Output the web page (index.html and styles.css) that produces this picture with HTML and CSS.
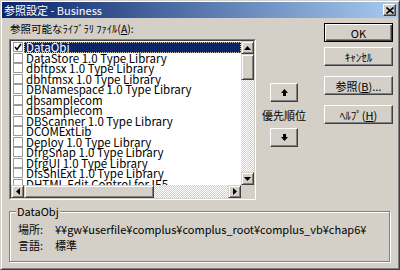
FILE: index.html
```html
<!DOCTYPE html>
<html lang="ja">
<head>
    <meta charset="UTF-8">
    <title>参照設定 - Business</title>
    <link rel="stylesheet" href="styles.css">
</head>
<body>
<div class="window">
    <div class="titlebar">
        <span class="title">参照設定 - Business</span>
        <div class="close-btn">
            <svg viewBox="0 0 8 7" width="8" height="7">
                <path d="M0.5 0.5 L7.5 6.5 M7.5 0.5 L0.5 6.5" stroke="#000" stroke-width="1.6" fill="none"/>
            </svg>
        </div>
    </div>

    <div class="main">
        <div class="top">
            <!-- Library list -->
            <div class="left">
                <div class="label">参照可能なﾗｲﾌﾞﾗﾘ ﾌｧｲﾙ(<u>A</u>):</div>
                <div class="listbox">
                    <div class="listbox-inner">
                        <div class="rows">
                            <div class="row selected">
                                <span class="check">
                                    <svg viewBox="0 0 8 8" width="8" height="8"><path d="M1 4 L3 6.5 L7 1" stroke="#000" stroke-width="1.6" fill="none"/></svg>
                                </span>
                                <span class="name">DataObj</span>
                            </div>
                            <div class="row"><span class="check"></span><span class="name">DataStore 1.0 Type Library</span></div>
                            <div class="row"><span class="check"></span><span class="name">dbftpsx 1.0 Type Library</span></div>
                            <div class="row"><span class="check"></span><span class="name">dbhtmsx 1.0 Type Library</span></div>
                            <div class="row"><span class="check"></span><span class="name">DBNamespace 1.0 Type Library</span></div>
                            <div class="row"><span class="check"></span><span class="name">dbsamplecom</span></div>
                            <div class="row"><span class="check"></span><span class="name">dbsamplecom</span></div>
                            <div class="row"><span class="check"></span><span class="name">DBScanner 1.0 Type Library</span></div>
                            <div class="row"><span class="check"></span><span class="name">DCOMExtLib</span></div>
                            <div class="row"><span class="check"></span><span class="name">Deploy 1.0 Type Library</span></div>
                            <div class="row"><span class="check"></span><span class="name">DfrgSnap 1.0 Type Library</span></div>
                            <div class="row"><span class="check"></span><span class="name">DfrgUI 1.0 Type Library</span></div>
                            <div class="row"><span class="check"></span><span class="name">DfsShlExt 1.0 Type Library</span></div>
                            <div class="row"><span class="check"></span><span class="name">DHTML Edit Control for IE5</span></div>
                        </div>

                        <!-- Vertical scrollbar -->
                        <div class="vscroll">
                            <div class="sb-btn">
                                <svg viewBox="0 0 7 4" width="7" height="4"><path d="M3.5 0 L7 4 L0 4 Z" fill="#000"/></svg>
                            </div>
                            <div class="sb-thumb v"></div>
                            <div class="sb-track"></div>
                            <div class="sb-btn">
                                <svg viewBox="0 0 7 4" width="7" height="4"><path d="M0 0 L7 0 L3.5 4 Z" fill="#000"/></svg>
                            </div>
                        </div>

                        <!-- Horizontal scrollbar -->
                        <div class="hscroll">
                            <div class="sb-btn">
                                <svg viewBox="0 0 4 7" width="4" height="7"><path d="M4 0 L4 7 L0 3.5 Z" fill="#000"/></svg>
                            </div>
                            <div class="sb-thumb h"></div>
                            <div class="sb-track"></div>
                            <div class="sb-btn">
                                <svg viewBox="0 0 4 7" width="4" height="7"><path d="M0 0 L4 3.5 L0 7 Z" fill="#000"/></svg>
                            </div>
                        </div>
                        <div class="corner"></div>
                    </div>
                </div>
            </div>

            <!-- Priority -->
            <div class="priority">
                <div class="btn arrow-btn up">
                    <svg viewBox="0 0 7 7" width="7" height="7"><path d="M3.5 0 L7 4 L5 4 L5 7 L2 7 L2 4 L0 4 Z" fill="#000"/></svg>
                </div>
                <div class="priority-label">優先順位</div>
                <div class="btn arrow-btn">
                    <svg viewBox="0 0 7 7" width="7" height="7"><path d="M2 0 L5 0 L5 3 L7 3 L3.5 7 L0 3 L2 3 Z" fill="#000"/></svg>
                </div>
            </div>

            <!-- Command buttons -->
            <div class="buttons">
                <div class="btn default">OK</div>
                <div class="btn">ｷｬﾝｾﾙ</div>
                <div class="btn spaced">参照(<u>B</u>)...</div>
                <div class="btn spaced">ﾍﾙﾌﾟ(<u>H</u>)</div>
            </div>
        </div>

        <!-- Details -->
        <div class="group">
            <div class="legend">DataObj</div>
            <div class="info">
                <span>場所:</span>
                <span>¥¥gw¥userfile¥complus¥complus_root¥complus_vb¥chap6¥</span>
                <span>言語:</span>
                <span>標準</span>
            </div>
        </div>
    </div>
</div>
</body>
</html>
```

FILE: styles.css
```css
html, body {
    margin: 0;
    background-color: #d4d0c8;
    font-family: "Noto Sans CJK JP", "Liberation Sans", sans-serif;
    font-size: 11px;
    color: #000000;
}
.window {
    width: 400px;
    height: 270px;
    box-sizing: border-box;
    border: 1px solid;
    border-color: #d4d0c8 #404040 #404040 #d4d0c8;
    box-shadow: inset 1px 1px #ffffff, inset -1px -1px #808080;
    padding: 1px;
    display: flex;
    flex-direction: column;
}
.titlebar {
    height: 16px;
    display: flex;
    align-items: center;
    padding-left: 2px;
    background: linear-gradient(to right, #0a246a, #a6caf0);
    color: #ffffff;
    line-height: 16px;
}
.close-btn {
    margin-left: auto;
    margin-right: 2px;
    width: 13px;
    height: 12px;
    box-sizing: border-box;
    background-color: #d4d0c8;
    border: 1px solid;
    border-color: #ffffff #404040 #404040 #ffffff;
    box-shadow: inset -1px -1px #808080;
    display: flex;
    align-items: center;
    justify-content: center;
}
.close-btn svg {
    display: block;
}
.main {
    padding: 4px 5px 0 7px;
}
.top {
    display: flex;
    align-items: flex-start;
}
/* list column */
.left {
    width: 247px;
}
.label {
    height: 14px;
    line-height: 14px;
    margin-bottom: 3px;
    padding-left: 1px;
    font-size: 10.5px;
    white-space: nowrap;
}
.listbox {
    height: 161px;
    box-sizing: border-box;
    border: 1px solid;
    border-color: #808080 #ffffff #ffffff #808080;
}
.listbox-inner {
    height: 100%;
    box-sizing: border-box;
    border: 1px solid;
    border-color: #404040 #d4d0c8 #d4d0c8 #404040;
    background-color: #ffffff;
    display: grid;
    grid-template-columns: 1fr 13px;
    grid-template-rows: 1fr 13px;
}
.rows {
    overflow: hidden;
    padding-top: 1px;
}
.row {
    height: 10.5px;
    display: flex;
    align-items: center;
    font-size: 11.5px;
    line-height: 10.5px;
    white-space: nowrap;
}
.check {
    width: 10px;
    height: 10px;
    box-sizing: border-box;
    margin-left: 2px;
    margin-right: 1px;
    border: 1px solid #9a9a9a;
    background-color: #ffffff;
    display: flex;
    align-items: center;
    justify-content: center;
    flex-shrink: 0;
}
.check svg {
    display: block;
}
.name {
    flex: 1;
    padding-left: 2px;
    height: 100%;
}
.row.selected .name {
    background-color: #0a246a;
    color: #ffffff;
    outline: 1px dotted #c8c4b0;
    outline-offset: -1px;
}
/* scrollbars */
.vscroll {
    display: flex;
    flex-direction: column;
}
.hscroll {
    display: flex;
}
.sb-btn {
    width: 13px;
    height: 13px;
    box-sizing: border-box;
    flex-shrink: 0;
    background-color: #d4d0c8;
    border: 1px solid;
    border-color: #d4d0c8 #404040 #404040 #d4d0c8;
    box-shadow: inset 1px 1px #ffffff, inset -1px -1px #808080;
    display: flex;
    align-items: center;
    justify-content: center;
}
.sb-btn svg {
    display: block;
}
.sb-thumb {
    box-sizing: border-box;
    flex-shrink: 0;
    background-color: #d4d0c8;
    border: 1px solid;
    border-color: #d4d0c8 #404040 #404040 #d4d0c8;
    box-shadow: inset 1px 1px #ffffff, inset -1px -1px #808080;
}
.sb-thumb.v {
    height: 26px;
}
.sb-thumb.h {
    width: 130px;
}
.sb-track {
    flex: 1;
    background: repeating-conic-gradient(#ffffff 0 25%, #d4d0c8 0 50%) 0 0 / 2px 2px;
}
.corner {
    background-color: #d4d0c8;
}
/* priority column */
.priority {
    margin-left: 6px;
    width: 44px;
    display: flex;
    flex-direction: column;
    align-items: center;
}
.priority-label {
    line-height: 14px;
    margin: 6px 0;
    white-space: nowrap;
}
.btn {
    height: 19px;
    box-sizing: border-box;
    background-color: #d4d0c8;
    border: 1px solid;
    border-color: #ffffff #404040 #404040 #ffffff;
    box-shadow: inset -1px -1px #808080;
    display: flex;
    align-items: center;
    justify-content: center;
    line-height: 14px;
    white-space: nowrap;
}
.arrow-btn {
    width: 28px;
}
.arrow-btn.up {
    margin-top: 61px;
}
.arrow-btn svg {
    display: block;
}
/* command buttons */
.buttons {
    margin-left: auto;
    margin-top: 1px;
    width: 69px;
    display: flex;
    flex-direction: column;
    gap: 5px;
}
.btn.default {
    border-color: #000000;
    box-shadow: inset 1px 1px #ffffff, inset -1px -1px #404040, inset -2px -2px #808080;
}
.btn.spaced {
    margin-top: 5px;
}
/* details group */
.group {
    margin-top: 11px;
    width: 381px;
    height: 51px;
    box-sizing: border-box;
    border: 1px solid #808080;
    box-shadow: inset 1px 1px #ffffff, 1px 1px #ffffff;
    padding-left: 8px;
}
.legend {
    display: table;
    margin: -7px 0 0 -2px;
    padding: 0 1px;
    line-height: 13px;
    background-color: #d4d0c8;
}
.info {
    margin-top: 3px;
    display: grid;
    grid-template-columns: 37px auto;
    line-height: 16px;
    white-space: nowrap;
}
```
